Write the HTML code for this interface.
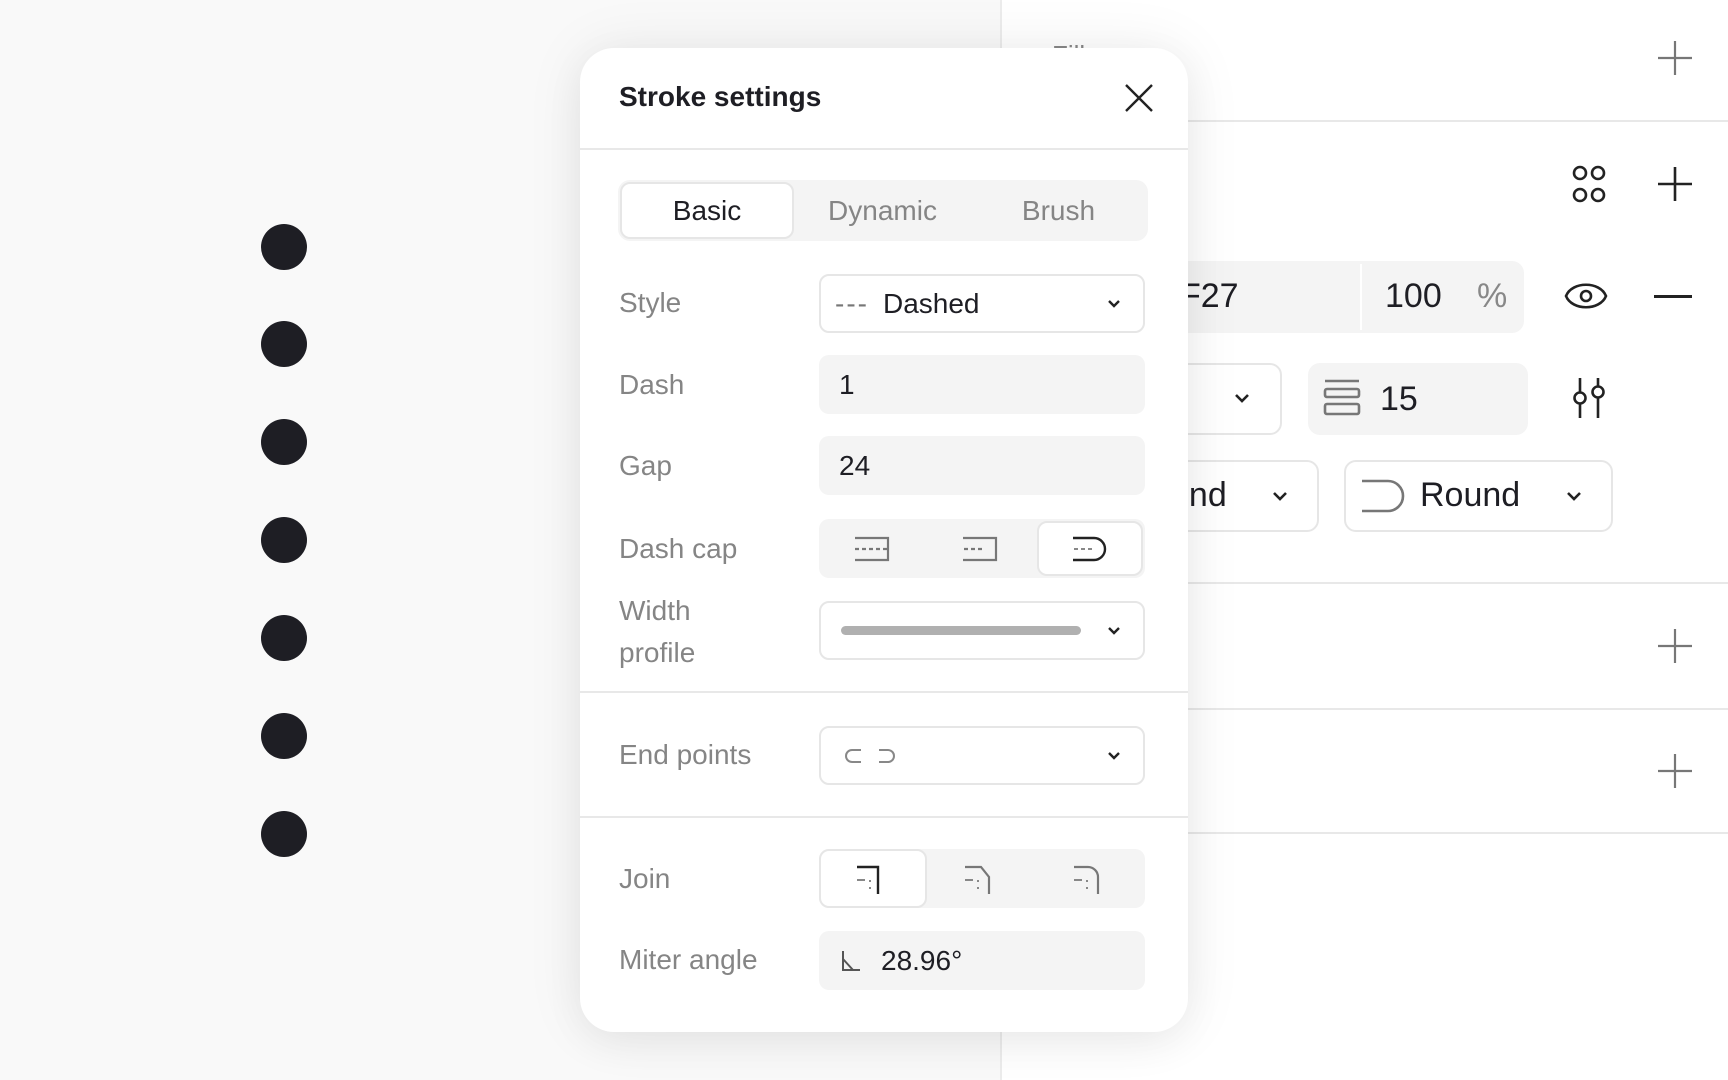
<!DOCTYPE html>
<html><head><meta charset="utf-8"><style>
*{box-sizing:border-box;margin:0;padding:0}
body{width:1728px;height:1080px;overflow:hidden;position:relative;background:#f9f9f9;font-family:"Liberation Sans",sans-serif;color:#1e1e24}
.a{position:absolute}
.right{left:1000px;top:0;width:728px;height:1080px;background:#fff;border-left:2px solid #ececec}
.hl{position:absolute;height:2px;background:#e8e8e8;left:1000px;right:0}
.dot{position:absolute;left:261px;width:46px;height:46px;border-radius:50%;background:#1e1e24}
.pop{left:580px;top:48px;width:608px;height:984px;background:#fff;border-radius:34px;box-shadow:0 0 60px rgba(0,0,0,.07),0 10px 40px rgba(0,0,0,.05);z-index:5}
.lbl{position:absolute;left:39px;font-size:28px;color:#858585}
.inp{position:absolute;left:239px;width:326px;height:59px;border-radius:10px;background:#f4f4f4;font-size:28px;display:flex;align-items:center;padding-left:20px}
.box{background:#fff;border:2px solid #e6e6e6}
.chev{position:absolute;right:22px;top:50%;margin-top:-5px}
.div{position:absolute;left:0;right:0;height:2px;background:#e8e8e8}
.seg{position:absolute;display:flex;align-items:center;justify-content:center}
svg{display:block}
.t{font-size:34px;color:#1e1e24}
</style></head><body>
<div class="a right"></div>
<div class="hl" style="top:120px"></div>
<div class="hl" style="top:582px"></div>
<div class="hl" style="top:708px"></div>
<div class="hl" style="top:832px"></div>
<div class="a" style="left:1052px;top:40px;font-size:26px;color:#888">Fill</div>

<div class="dot" style="top:224px"></div><div class="dot" style="top:321px"></div><div class="dot" style="top:419px"></div><div class="dot" style="top:517px"></div><div class="dot" style="top:615px"></div><div class="dot" style="top:713px"></div><div class="dot" style="top:811px"></div>

<svg class="a" style="left:1656px;top:39px" width="38" height="38"><path d="M19 2v34M2 19h34" stroke="#777" stroke-width="2.2"/></svg>
<svg class="a" style="left:1656px;top:165px" width="38" height="38"><path d="M19 2v34M2 19h34" stroke="#222" stroke-width="2.6"/></svg>
<svg class="a" style="left:1656px;top:627px" width="38" height="38"><path d="M19 2v34M2 19h34" stroke="#777" stroke-width="2.2"/></svg>
<svg class="a" style="left:1656px;top:752px" width="38" height="38"><path d="M19 2v34M2 19h34" stroke="#777" stroke-width="2.2"/></svg>
<svg class="a" style="left:1570px;top:162px" width="38" height="44"><g fill="none" stroke="#222" stroke-width="2.6"><circle cx="10" cy="11" r="6"/><circle cx="28" cy="11" r="6"/><circle cx="10" cy="33" r="6"/><circle cx="28" cy="33" r="6"/></g></svg>
<div class="a" style="left:1150px;top:261px;width:374px;height:72px;background:#f4f4f4;border-radius:12px"></div>
<div class="a" style="left:1360px;top:264px;width:2px;height:66px;background:#fff"></div>
<div class="a t" style="left:1180px;top:277px">F27</div>
<div class="a t" style="left:1385px;top:277px">100</div>
<div class="a t" style="left:1477px;top:277px;color:#888">%</div>
<svg class="a" style="left:1563px;top:276px" width="46" height="40"><path d="M3 20C9 5 37 5 43 20C37 35 9 35 3 20Z" fill="none" stroke="#222" stroke-width="2.6"/><circle cx="23" cy="20" r="5" fill="none" stroke="#222" stroke-width="2.6"/></svg>
<div class="a" style="left:1654px;top:295px;width:38px;height:3px;background:#222"></div>
<div class="a box" style="left:1100px;top:363px;width:182px;height:72px;border-radius:12px"></div>
<svg class="a" style="left:1234px;top:393px" width="16" height="12"><path d="M2 2l6 6 6-6" fill="none" stroke="#222" stroke-width="2.6"/></svg>
<div class="a" style="left:1308px;top:363px;width:220px;height:72px;background:#f4f4f4;border-radius:12px"></div>
<svg class="a" style="left:1322px;top:378px" width="40" height="40"><g fill="none" stroke="#777" stroke-width="2.6"><path d="M3 3h34"/><rect x="3" y="11" width="34" height="8" rx="2"/><rect x="3" y="26" width="34" height="10" rx="2"/></g></svg>
<div class="a t" style="left:1380px;top:380px">15</div>
<svg class="a" style="left:1572px;top:376px" width="34" height="44"><g fill="none" stroke="#222" stroke-width="2.6"><path d="M8 2v14M8 28v14M26 2v8M26 22v20"/><circle cx="8" cy="22" r="5.5"/><circle cx="26" cy="16" r="5.5"/></g></svg>
<div class="a box" style="left:1100px;top:460px;width:219px;height:72px;border-radius:12px"></div>
<div class="a t" style="left:1170px;top:476px">und</div>
<svg class="a" style="left:1272px;top:491px" width="16" height="12"><path d="M2 2l6 6 6-6" fill="none" stroke="#222" stroke-width="2.6"/></svg>
<div class="a box" style="left:1344px;top:460px;width:269px;height:72px;border-radius:12px"></div>
<svg class="a" style="left:1360px;top:478px" width="46" height="36"><path d="M2 3h26a15 15 0 0 1 0 30H2" fill="none" stroke="#777" stroke-width="2.6"/></svg>
<div class="a t" style="left:1420px;top:476px">Round</div>
<svg class="a" style="left:1566px;top:491px" width="16" height="12"><path d="M2 2l6 6 6-6" fill="none" stroke="#222" stroke-width="2.6"/></svg>

<div class="a pop">
 <div class="a" style="left:39px;top:33px;font-size:28px;font-weight:bold;color:#1e1e24">Stroke settings</div>
 <svg class="a" style="left:544px;top:35px" width="30" height="30"><path d="M2 2l26 26M28 2L2 28" stroke="#222" stroke-width="2.4"/></svg>
 <div class="div" style="top:100px"></div>
 <div class="a" style="left:38px;top:132px;width:530px;height:61px;background:#f4f4f4;border-radius:12px"></div>
 <div class="a" style="left:40px;top:134px;width:174px;height:57px;background:#fff;border:2px solid #e6e6e6;border-radius:10px"></div>
 <div class="seg" style="left:40px;top:134px;width:174px;height:57px;font-size:28px">Basic</div>
 <div class="seg" style="left:214px;top:134px;width:177px;height:57px;font-size:28px;color:#858585">Dynamic</div>
 <div class="seg" style="left:391px;top:134px;width:175px;height:57px;font-size:28px;color:#858585">Brush</div>

 <div class="lbl" style="top:239px">Style</div>
 <div class="inp box" style="top:226px;padding-left:14px"><span style="color:#777;letter-spacing:2px;margin-right:14px">---</span>Dashed<svg class="chev" width="14" height="10"><path d="M2 2l5 5 5-5" fill="none" stroke="#222" stroke-width="2.4"/></svg></div>
 <div class="lbl" style="top:321px">Dash</div>
 <div class="inp" style="top:307px">1</div>
 <div class="lbl" style="top:402px">Gap</div>
 <div class="inp" style="top:388px">24</div>
 <div class="lbl" style="top:485px">Dash cap</div>
 <div class="inp" style="top:471px;padding:0"></div>
 <div class="a" style="left:457px;top:473px;width:106px;height:55px;background:#fff;border:2px solid #e6e6e6;border-radius:10px"></div>
 <svg class="a" style="left:272px;top:487px" width="40" height="28"><g fill="none" stroke="#777" stroke-width="2.2"><path d="M3 3h33v22H3"/><path d="M3 14h32" stroke-dasharray="4 3"/></g></svg>
 <svg class="a" style="left:380px;top:487px" width="40" height="28"><g fill="none" stroke="#777" stroke-width="2.2"><path d="M3 3h33v22H3"/><path d="M4 14h18" stroke-dasharray="4 3"/></g></svg>
 <svg class="a" style="left:490px;top:487px" width="40" height="28"><g fill="none" stroke="#222" stroke-width="2.4"><path d="M3 3h21a11 11 0 0 1 0 22H3"/></g><path d="M4 14h18" stroke="#888" stroke-width="2" stroke-dasharray="4 3"/></svg>
 <div class="lbl" style="top:542px;line-height:42px">Width<br>profile</div>
 <div class="inp box" style="top:553px;padding-left:20px"><div style="width:240px;height:9px;border-radius:5px;background:#b0b0b0"></div><svg class="chev" width="14" height="10"><path d="M2 2l5 5 5-5" fill="none" stroke="#222" stroke-width="2.4"/></svg></div>
 <div class="div" style="top:643px"></div>
 <div class="lbl" style="top:691px">End points</div>
 <div class="inp box" style="top:678px"><svg width="60" height="20"><g fill="none" stroke="#888" stroke-width="2"><path d="M20 4H11a6 6 0 0 0 0 12h9"/><path d="M38 4h9a6 6 0 0 1 0 12h-9"/></g></svg><svg class="chev" width="14" height="10"><path d="M2 2l5 5 5-5" fill="none" stroke="#222" stroke-width="2.4"/></svg></div>
 <div class="div" style="top:768px"></div>
 <div class="lbl" style="top:815px">Join</div>
 <div class="inp" style="top:801px;padding:0"></div>
 <div class="a" style="left:239px;top:801px;width:108px;height:59px;background:#fff;border:2px solid #e6e6e6;border-radius:10px"></div>
 <svg class="a" style="left:270px;top:816px" width="40" height="32"><path d="M7 3h21v27" fill="none" stroke="#222" stroke-width="2.4"/><path d="M7 16h8M20 16v2M20 23v2" stroke="#888" stroke-width="2"/></svg>
 <svg class="a" style="left:378px;top:816px" width="40" height="32"><path d="M7 3h16l8 10v17" fill="none" stroke="#777" stroke-width="2.2"/><path d="M7 16h8M20 16v2M20 23v2" stroke="#888" stroke-width="2"/></svg>
 <svg class="a" style="left:487px;top:816px" width="40" height="32"><path d="M7 3h14a10 10 0 0 1 10 10v17" fill="none" stroke="#777" stroke-width="2.2"/><path d="M7 16h8M20 16v2M20 23v2" stroke="#888" stroke-width="2"/></svg>
 <div class="lbl" style="top:896px">Miter angle</div>
 <div class="inp" style="top:883px"><svg width="24" height="24" style="margin-right:18px"><path d="M4 2v19h17M4 10l10 11" fill="none" stroke="#555" stroke-width="2"/></svg>28.96°</div>
</div>
</body></html>
